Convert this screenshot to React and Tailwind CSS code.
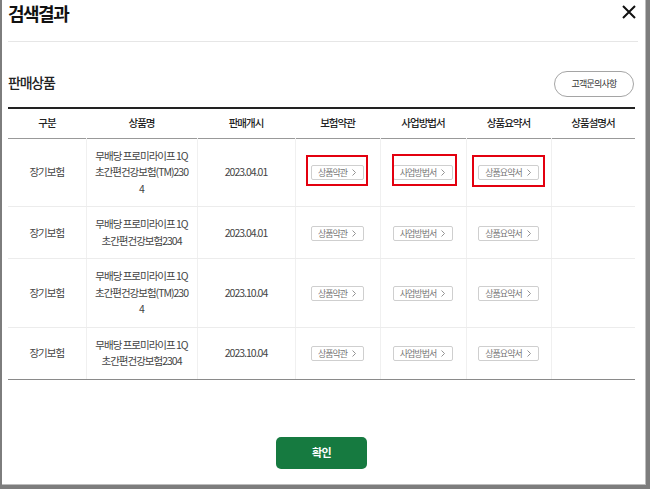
import React from "react";

const F = { fontFamily: '"Noto Sans CJK KR", "Noto Sans", sans-serif' };

function Chev() {
  return (
    <svg width="4" height="7" viewBox="0 0 4 7" className="shrink-0">
      <path d="M0.5 0.5 L3.5 3.5 L0.5 6.5" fill="none" stroke="#888" strokeWidth="0.9" />
    </svg>
  );
}

function DocBtn({ label, red }) {
  return (
    <span className="relative inline-block">
      <span className="inline-flex h-[15px] items-center gap-[5px] rounded-[2px] border border-[#cfcfcf] bg-white pl-[6px] pr-[7px] text-[9px] leading-none tracking-[-1px] text-[#777]">
        {label}
        <Chev />
      </span>
      {red}
    </span>
  );
}

const rows = [
  { name: ["무배당 프로미라이프 1Q", "초간편건강보험(TM)230", "4"], date: "2023.04.01", mark: true },
  { name: ["무배당 프로미라이프 1Q", "초간편건강보험2304"], date: "2023.04.01" },
  { name: ["무배당 프로미라이프 1Q", "초간편건강보험(TM)230", "4"], date: "2023.10.04" },
  { name: ["무배당 프로미라이프 1Q", "초간편건강보험2304"], date: "2023.10.04", last: true },
];

export default function App() {
  const vline = "border-l border-[#f0f0f0]";
  return (
    <div style={F} className="h-[489px] w-[650px] bg-[#7d7d7d] pb-[4px] pl-[2px] pr-[4px]">
      <div className="h-full w-full border-b border-r border-[#bdbdbd] bg-white pl-[6px]">
        <div className="w-[630px]">
          <div className="flex h-[42px] items-start justify-between border-b border-[#e6e6e6]">
            <div className="text-[18px] font-bold leading-[26px] tracking-[-1.5px] text-[#111]">검색결과</div>
            <svg width="14" height="14" viewBox="0 0 14 14" className="mr-[2px] mt-[5px]">
              <path d="M1 1 L13 13 M13 1 L1 13" stroke="#111" strokeWidth="2" />
            </svg>
          </div>
        </div>
        <div className="w-[627px]">
          <div className="flex items-center justify-between pb-[10px] pt-[29px]">
            <div className="mb-[4px] text-[14px] font-medium tracking-[-1.2px] text-[#222]">판매상품</div>
            <div className="mr-[1px] flex h-[26px] w-[80px] items-center justify-center rounded-full border border-[#a5a5a5] text-[9px] tracking-[-0.8px] text-[#333]">
              고객문의사항
            </div>
          </div>
          <table className="w-[627px] table-fixed border-collapse border-t-2 border-t-[#222] text-[10.5px] tracking-[-1px] text-[#444]">
            <colgroup>
              <col className="w-[78px]" />
              <col className="w-[111px]" />
              <col className="w-[98px]" />
              <col className="w-[85px]" />
              <col className="w-[86px]" />
              <col className="w-[85px]" />
              <col className="w-[84px]" />
            </colgroup>
            <thead>
              <tr className="h-[30px] border-b border-[#999] text-[10.5px] text-[#222]">
                <th className="font-medium">구분</th>
                <th className="font-medium">상품명</th>
                <th className="font-medium">판매개시</th>
                <th className="font-medium">보험약관</th>
                <th className="font-medium">사업방법서</th>
                <th className="font-medium">상품요약서</th>
                <th className="font-medium">상품설명서</th>
              </tr>
            </thead>
            <tbody>
              {rows.map((r, i) => {
                const td = `border-b ${r.last ? "border-b-[#8a8a8a]" : "border-b-[#ececec]"} py-[9px] text-center align-middle`;
                return (
                  <tr key={i}>
                    <td className={td}>장기보험</td>
                    <td className={`${td} ${vline} px-[5px] leading-[16.5px]`}>
                      {r.name.map((l, j) => (
                        <div key={j}>{l}</div>
                      ))}
                    </td>
                    <td className={`${td} ${vline}`}>{r.date}</td>
                    <td className={`${td} ${vline}`}>
                      <DocBtn
                        label="상품약관"
                        red={r.mark ? <span className="absolute -bottom-[6px] -left-[5px] -right-[4px] -top-[9px] border-2 border-[#e3000f]" /> : null}
                      />
                    </td>
                    <td className={`${td} ${vline}`}>
                      <DocBtn
                        label="사업방법서"
                        red={r.mark ? <span className="absolute -bottom-[6px] -left-[1px] -right-[4px] -top-[10px] border-2 border-[#e3000f]" /> : null}
                      />
                    </td>
                    <td className={`${td} ${vline}`}>
                      <DocBtn
                        label="상품요약서"
                        red={r.mark ? <span className="absolute -bottom-[7px] -left-[6px] -right-[6px] -top-[9px] border-2 border-[#e3000f]" /> : null}
                      />
                    </td>
                    <td className={`${td} ${vline}`}></td>
                  </tr>
                );
              })}
            </tbody>
          </table>
          <div className="flex justify-center pt-[57px]">
            <div className="flex h-[32px] w-[91px] items-center justify-center rounded-[5px] bg-[#167a40] text-[11px] font-bold tracking-[-0.5px] text-white">
              확인
            </div>
          </div>
        </div>
      </div>
    </div>
  );
}
